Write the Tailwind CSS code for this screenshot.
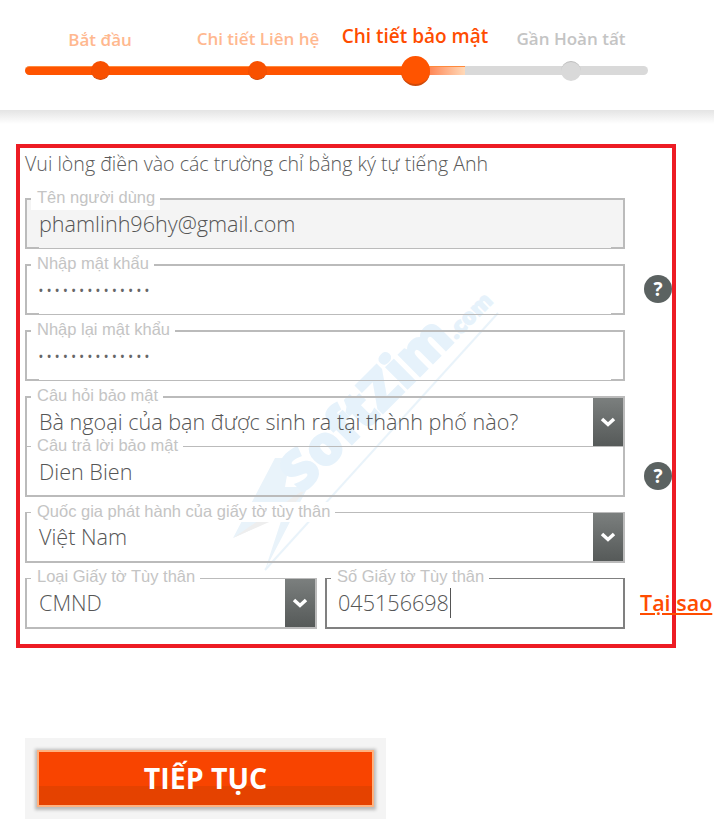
<!DOCTYPE html>
<html lang="en">
  <head>
    <meta charset="UTF-8" />
    <title>Chi tiết bảo mật</title>
    <script src="https://cdn.jsdelivr.net/npm/@tailwindcss/browser@4"></script>
  </head>
  <body class="bg-white overflow-hidden font-['Liberation_Sans',sans-serif]">
    <div class="relative w-[714px] h-[838px] overflow-hidden">
      <!-- Stepper -->
      <div class="h-[110px] pt-[27px] px-[25px]">
        <div class="relative h-[24px] font-['Open_Sans',sans-serif] font-semibold text-[17px] text-center whitespace-nowrap">
          <span class="absolute left-[40px] top-0 w-[70px] text-[#ffb88f]">Bắt đầu</span>
          <span class="absolute left-[163px] top-[-1px] w-[140px] text-[#ffb88f]">Chi tiết Liên hệ</span>
          <span class="absolute left-[305px] top-[-5px] w-[170px] text-[#ff4c00] text-[19px]">Chi tiết bảo mật</span>
          <span class="absolute left-[486px] top-[-1px] w-[120px] text-[#c4c4c4]">Gần Hoàn tất</span>
        </div>
        <div class="relative mt-[15px] h-[9px] w-[623px] rounded-full bg-[#d9d9d9]">
          <div class="h-full w-[440px] rounded-l-full bg-gradient-to-r from-[#ff5400] from-[88%] to-[#ffd9b8] border-t border-t-[#ff8a3c]"></div>
          <div class="absolute left-[66px] top-[-5px] w-[19px] h-[19px] rounded-full bg-[#f85000] border-b border-[#d04a0a]"></div>
          <div class="absolute left-[223px] top-[-5px] w-[19px] h-[19px] rounded-full bg-[#f85000] border-b border-[#d04a0a]"></div>
          <div class="absolute left-[376px] top-[-10px] w-[29px] h-[30px] rounded-full bg-[#ff5400] border-b-2 border-[#d04a0a]"></div>
          <div class="absolute left-[536px] top-[-5px] w-[20px] h-[20px] rounded-full bg-[#d9d9d9] border-t border-[#bdbdbd]"></div>
        </div>
      </div>
      <div class="h-[14px] bg-gradient-to-b from-[#e4e4e4] to-white"></div>

      <!-- Red frame -->
      <div class="relative ml-[16px] mt-[20px] w-[660px] h-[504px] border-[4px] border-[#ed1c24]">
        <p class="ml-[5px] mt-[3px] h-[47px] text-[19.6px] leading-[26px] text-[#5a5a5a] font-['Open_Sans',sans-serif] font-light whitespace-nowrap">Vui lòng điền vào các trường chỉ bằng ký tự tiếng Anh</p>

        <!-- Watermark -->
        <svg class="absolute left-[210px] top-[122px] overflow-visible" width="295" height="310" viewBox="0 -20 295 310">
          <polygon points="45,168 3,248 53,225 35,280 78,197 78,197 55,197 60,168" fill="#e9f3fa" />
          <polygon points="3,248 78,197 55,225" fill="#eeeeee" />
          <text x="0" y="0" transform="translate(72 204) rotate(-45)" font-family="Open Sans" font-weight="800" font-size="54" stroke="#e6f2fb" stroke-width="2" fill="#e6f2fb">SoftZim<tspan font-size="22" stroke-width="1">.com</tspan></text>
          <line x1="35" y1="280" x2="268" y2="23" stroke="#e9f3fa" stroke-width="2" />
        </svg>

        <div class="relative flex flex-col gap-[15px] ml-[5px] w-[600px] font-['Open_Sans',sans-serif] font-light text-[21.6px] text-[#555]">
          <!-- Username -->
          <div class="relative h-[51px] bg-[#f4f4f4] border-2 border-b border-[#bbb]">
            <span class="absolute left-[4px] top-[-12px] h-[22px] pl-[6px] pr-[5px] bg-white font-['Liberation_Sans',sans-serif] font-normal text-[16.5px] leading-[18px] text-[#c4c4c4] whitespace-nowrap">Tên người dùng</span>
            <span class="absolute left-[12px] top-[9px] leading-[30px]">phamlinh96hy@gmail.com</span>
            <span class="absolute left-[-2px] bottom-[-1px] w-[14px] h-[2px] bg-[#bbb]"></span>
            <span class="absolute right-[-2px] bottom-[-1px] w-[14px] h-[2px] bg-[#bbb]"></span>
          </div>

          <!-- Password -->
          <div class="relative h-[51px] border-2 border-b border-[#bbb]">
            <span class="absolute left-[4px] top-[-12px] h-[20px] pl-[6px] pr-[5px] bg-white font-['Liberation_Sans',sans-serif] font-normal text-[16.5px] leading-[18px] text-[#c4c4c4] whitespace-nowrap">Nhập mật khẩu</span>
            <span class="absolute left-[12px] top-[12px] text-[10px] font-bold tracking-[4.4px] leading-[24px] text-[#666] whitespace-nowrap">••••••••••••••</span>
            <span class="absolute left-[617px] top-[9px] w-[28px] h-[28px] rounded-full bg-[#5b6261] text-white text-[19px] leading-[28px] text-center font-bold">?</span>
            <span class="absolute left-[-2px] bottom-[-1px] w-[14px] h-[2px] bg-[#bbb]"></span>
            <span class="absolute right-[-2px] bottom-[-1px] w-[14px] h-[2px] bg-[#bbb]"></span>
          </div>

          <!-- Confirm password -->
          <div class="relative h-[51px] border-2 border-b border-[#bbb]">
            <span class="absolute left-[4px] top-[-12px] h-[20px] pl-[6px] pr-[5px] bg-white font-['Liberation_Sans',sans-serif] font-normal text-[16.5px] leading-[18px] text-[#c4c4c4] whitespace-nowrap">Nhập lại mật khẩu</span>
            <span class="absolute left-[12px] top-[12px] text-[10px] font-bold tracking-[4.4px] leading-[24px] text-[#666] whitespace-nowrap">••••••••••••••</span>
            <span class="absolute left-[-2px] bottom-[-1px] w-[14px] h-[2px] bg-[#bbb]"></span>
            <span class="absolute right-[-2px] bottom-[-1px] w-[14px] h-[2px] bg-[#bbb]"></span>
          </div>

          <!-- Security question + answer share a border -->
          <div>
            <div class="relative h-[50px] border-2 border-b-0 border-[#bbb]">
              <span class="absolute left-[4px] top-[-12px] h-[20px] pl-[6px] pr-[5px] bg-white font-['Liberation_Sans',sans-serif] font-normal text-[16.5px] leading-[18px] text-[#c4c4c4] whitespace-nowrap">Câu hỏi bảo mật</span>
              <span class="absolute left-[12px] top-[9px] leading-[30px] whitespace-nowrap">Bà ngoại của bạn được sinh ra tại thành phố nào?</span>
              <span class="absolute right-0 top-0 w-[30px] h-[48px] flex items-center justify-center bg-gradient-to-b from-[#7b7f7e] to-[#565a59]">
                <svg width="16" height="10" viewBox="0 0 16 10"><path d="M2 2l6 5.5L14 2" fill="none" stroke="#fff" stroke-width="3.5" /></svg>
              </span>
            </div>
            <div class="relative h-[51px] border-2 border-t border-[#bbb]">
              <span class="absolute left-[4px] top-[-11px] h-[20px] pl-[6px] pr-[5px] bg-gradient-to-b from-transparent from-50% to-white to-50% font-['Liberation_Sans',sans-serif] font-normal text-[16.5px] leading-[18px] text-[#c4c4c4] whitespace-nowrap">Câu trả lời bảo mật</span>
              <span class="absolute left-[12px] top-[10px] leading-[30px]">Dien Bien</span>
              <span class="absolute left-[617px] top-[15px] w-[28px] h-[28px] rounded-full bg-[#5b6261] text-white text-[19px] leading-[28px] text-center font-bold">?</span>
            </div>
          </div>

          <!-- Country -->
          <div class="relative h-[51px] border-2 border-t border-[#bbb]">
            <span class="absolute left-[4px] top-[-11px] h-[20px] pl-[6px] pr-[5px] bg-white font-['Liberation_Sans',sans-serif] font-normal text-[16.5px] leading-[18px] text-[#c4c4c4] whitespace-nowrap">Quốc gia phát hành của giấy tờ tùy thân</span>
            <span class="absolute left-[12px] top-[9px] leading-[30px]">Việt Nam</span>
            <span class="absolute right-0 top-0 w-[30px] h-[48px] flex items-center justify-center bg-gradient-to-b from-[#7b7f7e] to-[#565a59]">
              <svg width="16" height="10" viewBox="0 0 16 10"><path d="M2 2l6 5.5L14 2" fill="none" stroke="#fff" stroke-width="3.5" /></svg>
            </span>
          </div>

          <!-- ID type + number -->
          <div class="flex gap-[8px]">
            <div class="relative w-[292px] h-[51px] border-2 border-t border-[#bbb]">
              <span class="absolute left-[4px] top-[-12px] h-[20px] pl-[6px] pr-[5px] bg-white font-['Liberation_Sans',sans-serif] font-normal text-[16.5px] leading-[18px] text-[#c4c4c4] whitespace-nowrap">Loại Giấy tờ Tùy thân</span>
              <span class="absolute left-[12px] top-[9px] leading-[30px]">CMND</span>
              <span class="absolute right-0 top-0 w-[30px] h-[48px] flex items-center justify-center bg-gradient-to-b from-[#7b7f7e] to-[#565a59]">
                <svg width="16" height="10" viewBox="0 0 16 10"><path d="M2 2l6 5.5L14 2" fill="none" stroke="#fff" stroke-width="3.5" /></svg>
              </span>
            </div>
            <div class="relative w-[300px] h-[51px] border-2 border-t border-[#808080]">
              <span class="absolute left-[4px] top-[-12px] h-[20px] pl-[6px] pr-[5px] bg-white font-['Liberation_Sans',sans-serif] font-normal text-[16.5px] leading-[18px] text-[#c4c4c4] whitespace-nowrap">Số Giấy tờ Tùy thân</span>
              <span class="absolute left-[11px] top-[9px] leading-[30px] pr-px border-r border-[#555]">045156698</span>
              <a href="#" class="absolute left-[313px] top-[9px] leading-[30px] font-semibold text-[21.5px] text-[#ff4c00] underline whitespace-nowrap">Tại sao</a>
            </div>
          </div>
        </div>
      </div>

      <!-- Continue button -->
      <div class="ml-[25px] mt-[90px] w-[361px] h-[81px] p-[12px] bg-[#f4f4f4]">
        <button class="w-[337px] h-[57px] border-[2px] border-[#ffb27f] bg-gradient-to-b from-[#f84400] from-[65%] to-[#e54200] to-[65%] shadow-[0_1px_3px_2px_#bbb] text-white font-['Open_Sans',sans-serif] font-bold text-[28.5px]">TIẾP TỤC</button>
      </div>
    </div>
  </body>
</html>
